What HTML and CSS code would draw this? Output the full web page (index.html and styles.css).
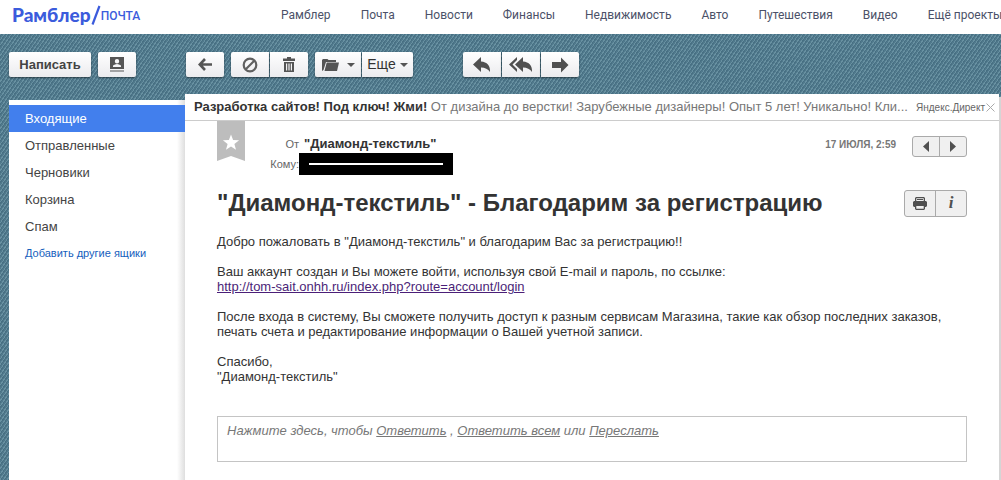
FILE: index.html
```html
<!DOCTYPE html>
<html lang="ru">
<head>
<meta charset="utf-8">
<title>Рамблер/почта</title>
<link rel="stylesheet" href="styles.css">
</head>
<body>
<header class="top">
  <a class="logo" href="#"><span class="brand">Рамблер</span><svg class="slash" viewBox="0 0 10 20" aria-hidden="true"><path d="M1.500 19.500 8.500 1" stroke="#3b5bdc" stroke-width="2.200" fill="none"/></svg><span class="service">ПОЧТА</span></a>
  <nav class="projects">
    <a href="#">Рамблер</a><a href="#">Почта</a><a href="#">Новости</a><a href="#">Финансы</a><a href="#">Недвижимость</a><a href="#">Авто</a><a href="#">Путешествия</a><a href="#">Видео</a><a href="#">Ещё проекты</a>
  </nav>
</header>
<div class="app">
  <aside class="side">
    <div class="tools">
      <button class="btn compose">Написать</button>
      <button class="btn" aria-label="Контакты"><svg width="14" height="15" viewBox="0 0 14 15"><path fill="#555" fill-rule="evenodd" d="M0 0h14v12H0zM7 2a2.200 2.200 0 1 0 0 4.400A2.200 2.200 0 1 0 7 2zM3 10h8V8.500Q9 7 7 7T3 8.500zM0 13.500h14v1H0z"/></svg></button>
    </div>
    <nav class="folders">
      <a class="folder active" href="#">Входящие</a>
      <a class="folder" href="#">Отправленные</a>
      <a class="folder" href="#">Черновики</a>
      <a class="folder" href="#">Корзина</a>
      <a class="folder" href="#">Спам</a>
      <a class="add" href="#">Добавить другие ящики</a>
    </nav>
  </aside>
  <main class="main">
    <div class="tools">
      <button class="btn" aria-label="Назад"><svg width="14" height="13" viewBox="0 0 14 13"><path d="M7 1 1.800 6.500 7 12M2 6.500h12" fill="none" stroke="#555" stroke-width="2.600"/></svg></button>
      <div class="group">
        <button class="btn" aria-label="Спам"><svg width="16" height="16" viewBox="0 0 16 16"><g fill="none" stroke="#606060" stroke-width="2.200"><circle cx="8" cy="8" r="6.300"/><path d="m3.500 12.500 9-9"/></g></svg></button>
        <button class="btn" aria-label="Удалить"><svg width="12" height="15" viewBox="0 0 12 15"><path fill="#555" fill-rule="evenodd" d="M4 0h4v1.500h4V4H0V1.500h4zM1 5h10v10H1zm2 1.500v7h1.200v-7zm2.400 0v7h1.200v-7zm2.400 0v7H9v-7z"/></svg></button>
      </div>
      <div class="group">
        <button class="btn drop" aria-label="Переместить"><svg width="17" height="14" viewBox="0 0 17 14"><path fill="#555" d="M0 13V2l1-1h4.500l1 1H14v2H4L1.500 12z"/><path fill="#555" d="M4.700 4.500H17L15 13H2.500z"/></svg><span class="caret"></span></button>
        <button class="btn drop more">Еще<span class="caret"></span></button>
      </div>
      <div class="group reply-tools">
        <button class="btn" aria-label="Ответить"><svg width="18" height="16" viewBox="0 0 18 16"><path fill="#505050" d="M0 7.500 8 0v4.500c6 .5 9.500 4 9 10.500Q14 10.500 8 10.500V15z"/></svg></button>
        <button class="btn" aria-label="Ответить всем"><svg width="24" height="16" viewBox="0 0 24 16"><path fill="#505050" d="M6 7.500 14 0v4.500c6 .5 9.500 4 9 10.500Q20 10.500 14 10.500V15zM0 7.500 8 0v3L3.500 7.500 8 12v3z"/></svg></button>
        <button class="btn" aria-label="Переслать"><svg width="17" height="16" viewBox="0 0 17 16"><path fill="#505050" d="M0 5h9V.500L16.500 8 9 15.500V11H0z"/></svg></button>
      </div>
    </div>
    <article class="letter">
      <div class="ad">
        <a class="ad-text" href="#"><b>Разработка сайтов! Под ключ! Жми!</b> От дизайна до верстки! Зарубежные дизайнеры! Опыт 5 лет! Уникально! Кли...</a>
        <span class="direct">Яндекс.Директ</span>
        <button class="close" aria-label="Закрыть"><svg width="9" height="9" viewBox="0 0 9 9"><path d="m.5.5 8 8m0-8-8 8" stroke="#aaa" fill="none"/></svg></button>
      </div>
      <div class="content">
        <div class="meta">
          <button class="mark" aria-label="Отметить"><svg width="28" height="41" viewBox="0 0 28 41"><path fill="#bdbdbd" d="M0 0h28v40l-14-5-14 5z"/><path fill="#fff" d="m14 13.500 2.100 5.500 6 .3-4.700 3.700 1.600 5.700-5-3.200-5 3.200 1.600-5.700L5.900 19.300l6-.3z"/></svg></button>
          <dl class="people">
            <dt>От</dt><dd>"Диамонд-текстиль"</dd>
            <dt>Кому:</dt><dd class="redacted"><span></span></dd>
          </dl>
          <time class="date">17 ИЮЛЯ, 2:59</time>
          <div class="pair pager">
            <button aria-label="Предыдущее"><svg width="6" height="11" viewBox="0 0 6 11"><path fill="#505050" d="M6 0v11L0 5.500z"/></svg></button>
            <button aria-label="Следующее"><svg width="6" height="11" viewBox="0 0 6 11"><path fill="#505050" d="M0 0v11l6-5.500z"/></svg></button>
          </div>
        </div>
        <div class="subject">
          <h1>"Диамонд-текстиль" - Благодарим за регистрацию</h1>
          <div class="pair actions">
            <button aria-label="Печать"><svg width="14" height="13" viewBox="0 0 14 13"><path fill="#505050" fill-rule="evenodd" d="M3 0h8l1 1v3h1l1 1v4l-1 1h-1v2l-1 1H3l-1-1v-2H1L0 9V5l1-1h1V1zm.3 1.200V4h7.400V1.200zM3.300 9v2.800h7.400V9z"/><path stroke="#505050" d="M4 2.500h6"/></svg></button>
            <button class="info" aria-label="Информация">i</button>
          </div>
        </div>
        <div class="body">
          <p>Добро пожаловать в "Диамонд-текстиль" и благодарим Вас за регистрацию!!</p>
          <p>Ваш аккаунт создан и Вы можете войти, используя свой E-mail и пароль, по ссылке:<br><a href="#">http://tom-sait.onhh.ru/index.php?route=account/login</a></p>
          <p>После входа в систему, Вы сможете получить доступ к разным сервисам Магазина, такие как обзор последних заказов, печать счета и редактирование информации о Вашей учетной записи.</p>
          <p>Спасибо,<br>"Диамонд-текстиль"</p>
        </div>
        <div class="quick">Нажмите здесь, чтобы <a href="#">Ответить</a> , <a href="#">Ответить всем</a> или <a href="#">Переслать</a></div>
      </div>
    </article>
  </main>
</div>
</body>
</html>
```
FILE: styles.css
```css
* { box-sizing: border-box; }
body {
  margin: 0;
  min-height: 100vh;
  display: flex;
  flex-direction: column;
  overflow: hidden;
  font: 13px/15px "Liberation Sans", Arial, sans-serif;
  color: #333;
}
button { font: inherit; color: inherit; margin: 0; padding: 0; border: 0; background: none; }
svg { display: block; flex: none; }

.top { display: flex; align-items: center; height: 34px; padding: 0 0 4px 12px; background: #fff; white-space: nowrap; }
.logo { display: flex; align-items: center; width: 269px; flex: none; color: #3b5bdc; text-decoration: none; }
.brand { font: 900 19px/24px Lato, sans-serif; }
.slash { width: 10px; height: 20px; }
.service { padding-top: 2px; font: 500 12px/16px Roboto, sans-serif; }
.projects { display: flex; gap: 30px; }
.projects a { font: 12px/16px Roboto, sans-serif; color: #4b5168; text-decoration: none; }

.app {
  flex: 1;
  display: flex;
  padding: 0 2px 0 9px;
  background:
    repeating-linear-gradient(125deg, rgba(165, 205, 215, .28) 0 1px, rgba(30, 65, 85, .16) 1px 2px, transparent 2px 3px),
    #50798c;
}
.side { width: 176px; flex: none; display: flex; flex-direction: column; }
.main { flex: 1; min-width: 0; display: flex; flex-direction: column; }
.tools { display: flex; gap: 7px; height: 60px; padding-top: 18px; flex: none; }
.side .tools { height: 66px; }
.main .tools { padding-left: 1px; }
.btn {
  display: flex;
  align-items: center;
  justify-content: center;
  width: 38px;
  height: 25px;
  border-radius: 2px;
  background: linear-gradient(#fff, #ebebee);
  box-shadow: 0 1px 2px rgba(0, 0, 0, .5);
}
.compose { width: 82px; font-weight: 700; color: #444; }
.group { display: flex; gap: 1px; }
.group .btn:not(:first-child) { border-top-left-radius: 0; border-bottom-left-radius: 0; }
.group .btn:not(:last-child) { border-top-right-radius: 0; border-bottom-right-radius: 0; }
.group .drop { width: 46px; gap: 8px; }
.group .more { width: 51px; gap: 4px; font-size: 14px; }
.caret { border: 4px solid transparent; border-top-color: #555; border-bottom: 0; }
.reply-tools { margin-left: 43px; }

.folders { flex: 1; padding-top: 5px; background: linear-gradient(270deg, #dedede, #fff 8px); }
.folder { display: block; padding-left: 16px; line-height: 27px; color: #444; text-decoration: none; }
.folder.active { background: #427fed; color: #fff; }
.add { display: block; padding: 6px 0 0 16px; font-size: 11px; color: #1560bd; text-decoration: none; }

.letter { flex: 1; background: #fff; box-shadow: 2px 3px 0 #d5d5d5; }
.ad { display: flex; align-items: center; height: 27px; padding: 0 4px 0 9px; border-bottom: 1px solid #ccc; }
.ad-text { flex: 1; min-width: 0; overflow: hidden; text-overflow: ellipsis; white-space: nowrap; line-height: 18px; color: #777; text-decoration: none; }
.ad-text b { color: #333; }
.direct { margin-left: 8px; font-size: 10px; color: #666; }
.close { margin-left: 1px; }
.content { padding: 0 32px 18px; }
.meta { display: flex; align-items: flex-start; }
.people { display: grid; grid-template-columns: 54px 154px; row-gap: 1px; margin: 15px auto 0 0; align-items: center; }
.people dt { text-align: right; font-size: 11px; color: #666; }
.people dd { margin: 0 0 0 5px; line-height: 16px; font-weight: 700; white-space: nowrap; }
.people .redacted { margin: 0; height: 22px; padding: 10px; background: #000; }
.redacted span { display: block; height: 2px; background: #fff; }
.date { margin: 17px 16px 0 0; font-size: 10px; line-height: 13px; font-weight: 700; color: #777; }
.pair { display: flex; flex: none; border: 1px solid #aaa; border-radius: 3px; background: #f0f0f0; }
.pair button { flex: 1; display: flex; align-items: center; justify-content: center; }
.pair button + button { border-left: 1px solid #aaa; }
.pager { width: 55px; height: 21px; margin-top: 15px; }
.subject { display: flex; align-items: center; justify-content: space-between; margin-top: 14px; }
h1 { margin: 0; font-size: 24px; line-height: 28px; color: #333; white-space: nowrap; }
.actions { width: 63px; height: 27px; }
.pair .info { font: italic 700 17px/20px "Liberation Serif", serif; color: #505050; }
.body { margin-top: 17px; }
.body p { margin: 0 0 15px; }
.body a { color: #4b1f78; }
.quick { margin-top: 32px; min-height: 46px; padding: 6px 9px; border: 1px solid #c4c4c4; font-style: italic; color: #777; }
.quick a { color: #777; }
```
